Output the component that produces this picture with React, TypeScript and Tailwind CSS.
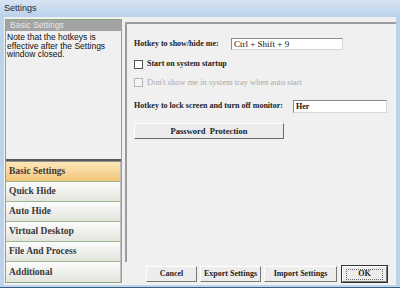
const serif = "font-['Liberation_Serif',serif]";
const sans = "font-['Liberation_Sans',sans-serif]";

const tabs = [
  "Basic Settings",
  "Quick Hide",
  "Auto Hide",
  "Virtual Desktop",
  "File And Process",
  "Additional",
];

function Check({ disabled }: { disabled?: boolean }) {
  return (
    <span
      className={`inline-block w-[9px] h-[9px] border shrink-0 ${
        disabled ? "border-[#b5b5b5] bg-[#f4f4f4]" : "border-[#555] bg-white"
      }`}
    />
  );
}

function Btn({ label, w, focused }: { label: string; w: string; focused?: boolean }) {
  return (
    <div
      className={`h-[16px] ${w} flex items-center justify-center bg-[#ececec] border border-t-white border-l-white border-r-[#777] border-b-[#777] ${serif} text-[8px] font-bold text-[#222] whitespace-nowrap ${
        focused ? "outline outline-1 outline-[#333]" : ""
      }`}
    >
      {focused ? (
        <span className="border border-dotted border-[#666] w-[37px] h-[11px] flex items-center justify-center leading-none">
          {label}
        </span>
      ) : (
        label
      )}
    </div>
  );
}

export default function App() {
  return (
    <div className="w-[400px] h-[288px] bg-[#bcd3eb] flex flex-col border-b border-[#365f80] overflow-hidden">
      <div className={`h-[17px] px-[4px] flex items-center ${sans} text-[9px] text-[#1e2a3a] bg-gradient-to-b from-[#d6e4f3] to-[#bad1ea]`}>
        Settings
      </div>
      <div className="flex-1 mx-[4px] mb-[2px] bg-[#f0f0f0] flex">
        {/* left column */}
        <div className="w-[117px] ml-[1px] mt-[2px] mb-[2px] border border-[#8aab7e] flex flex-col">
          <div className={`h-[11px] bg-[#a3a3a3] text-[#e8e8e8] ${sans} text-[8.5px] px-[4px] leading-[11px]`}>
            Basic Settings
          </div>
          <div className={`flex-1 ${sans} text-[8.5px] leading-[8.5px] text-[#111] px-[1px] pt-[2px]`}>
            Note that the hotkeys is effective after the Settings window closed.
          </div>
          <div className="h-[3px] bg-[#585858] border-b border-[#909090]" />
          {tabs.map((t, i) => (
            <div
              key={t}
              className={`h-[20px] flex items-center pl-[3px] ${serif} text-[9.5px] font-bold text-[#3a3a3a] border-b border-[#9bb58f] border-r border-r-[#bdbdbd] ${
                i === 0
                  ? "bg-gradient-to-b from-[#fde8b8] to-[#f2c57a]"
                  : "bg-gradient-to-b from-[#fbfbfb] to-[#e4e4de]"
              } ${i === tabs.length - 1 ? "border-b-0" : ""}`}
            >
              {t}
            </div>
          ))}
        </div>
        {/* right column */}
        <div className="flex-1 flex flex-col ml-[3px]">
          <div className="mt-[5px] h-[240px] border-t-2 border-l-2 border-[#9c9c9c] pl-[7px] pt-[13px]">
            <div className={`flex items-center h-[13px] ${serif} text-[8px] font-bold text-[#222] whitespace-nowrap`}>
              <span className="w-[97px]">Hotkey to show/hide me:</span>
              <div className="w-[112px] h-[12px] bg-white border border-t-[#8a8a8a] border-l-[#8a8a8a] border-r-[#d8d8d8] border-b-[#d8d8d8] font-normal text-[9px] leading-[10px] pl-[2px] text-[#111]">
                Ctrl + Shift + 9
              </div>
            </div>
            <div className={`mt-[9px] flex items-center gap-[4px] h-[10px] ${serif} text-[8px] font-bold text-[#222] whitespace-nowrap`}>
              <Check />
              <span>Start on system startup</span>
            </div>
            <div className={`mt-[8px] flex items-center gap-[4px] h-[10px] ${serif} text-[8.5px] text-[#aaa] whitespace-nowrap`}>
              <Check disabled />
              <span>Don't show me in system tray when auto start</span>
            </div>
            <div className={`mt-[12px] flex items-center h-[14px] ${serif} text-[8px] font-bold text-[#222] whitespace-nowrap`}>
              <span className="w-[159px]">Hotkey to lock screen and turn off monitor:</span>
              <div className="w-[94px] h-[13px] bg-white border border-t-[#8a8a8a] border-l-[#8a8a8a] border-r-[#d8d8d8] border-b-[#d8d8d8] font-bold text-[8px] leading-[11px] pl-[2px] text-[#111]">
                Her
              </div>
            </div>
            <div className={`mt-[10px] w-[150px] h-[16px] flex items-center justify-center bg-[#ececec] border border-t-white border-l-white border-r-[#6a6a6a] border-b-[#6a6a6a] ${serif} text-[8.5px] font-bold text-[#222]`}>
              Password&nbsp; Protection
            </div>
          </div>
          <div className="flex items-center mt-[4px] ml-[21px] gap-[3px]">
            <Btn label="Cancel" w="w-[51px]" />
            <Btn label="Export Settings" w="w-[61px]" />
            <Btn label="Import Settings" w="w-[73px]" />
            <div className="ml-[2px]">
              <Btn label="OK" w="w-[45px]" focused />
            </div>
          </div>
        </div>
      </div>
    </div>
  );
}
